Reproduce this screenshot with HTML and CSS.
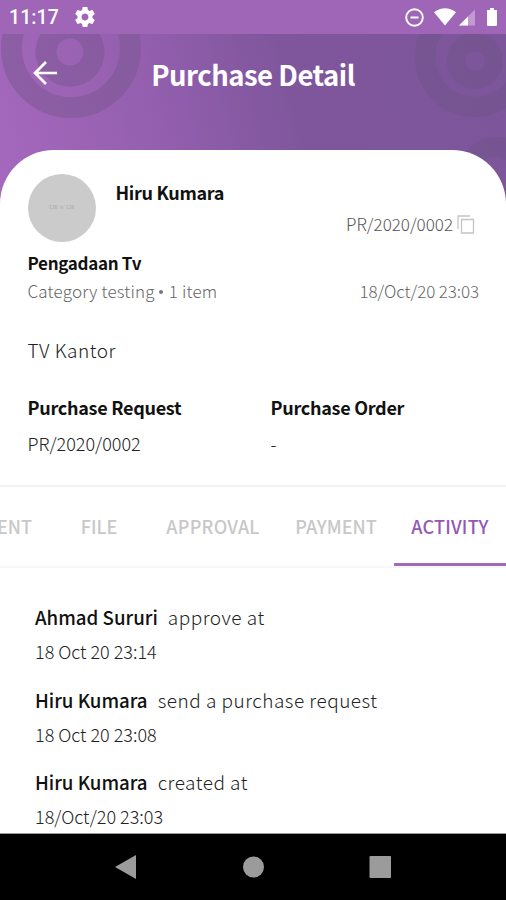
FILE: index.html
```
<!DOCTYPE html>
<html lang="en">
<head>
    <meta charset="UTF-8">
    <meta name="viewport" content="width=device-width, initial-scale=1.0">
    <title>Purchase Detail</title>
    <link rel="stylesheet" href="styles.css">
</head>
<body>
    <div class="status-bar">
        <span class="clock">11:17</span>
        <svg class="gear" width="20" height="20" viewBox="2 2 20 20" fill="#fff"><path d="M19.43 12.98c.04-.32.07-.64.07-.98s-.03-.66-.07-.98l2.11-1.65c.19-.15.24-.42.12-.64l-2-3.46c-.12-.22-.39-.3-.61-.22l-2.49 1c-.52-.4-1.08-.73-1.69-.98l-.38-2.65C14.46 2.18 14.25 2 14 2h-4c-.25 0-.46.18-.49.42l-.38 2.65c-.61.25-1.17.59-1.69.98l-2.49-1c-.23-.09-.49 0-.61.22l-2 3.46c-.13.22-.07.49.12.64l2.11 1.65c-.04.32-.07.65-.07.98s.03.66.07.98l-2.11 1.65c-.19.15-.24.42-.12.64l2 3.46c.12.22.39.3.61.22l2.49-1c.52.4 1.08.73 1.69.98l.38 2.65c.03.24.24.42.49.42h4c.25 0 .46-.18.49-.42l.38-2.65c.61-.25 1.17-.59 1.69-.98l2.49 1c.23.09.49 0 .61-.22l2-3.46c.12-.22.07-.49-.12-.64l-2.11-1.65zM12 15.5c-1.93 0-3.5-1.57-3.5-3.5s1.57-3.5 3.5-3.5 3.500 1.57 3.500 3.500-1.57 3.500-3.500 3.500z"/></svg>
        <svg class="status-icons" width="96" height="24" viewBox="0 0 96 24">
            <circle cx="9.500" cy="12.500" r="8.300" fill="none" stroke="#fff" stroke-width="1.900"/>
            <path d="M5.500 12.500h8" stroke="#fff" stroke-width="2"/>
            <path d="M29 7.200Q40 -.5 51 7.200L40 20.500z" fill="#fff"/>
            <path d="M54 20.500L70 4.500V20.500z" fill="#fff" opacity=".35"/>
            <path d="M54 20.500L63 11.500V20.500z" fill="#fff"/>
            <path d="M85 3h4v2h2.500q.5 0 .5.500V20q0 1-1 1h-8q-1 0-1-1V5.500q0-.5.500-.5H85z" fill="#fff"/>
        </svg>
    </div>

    <div class="header">
        <svg class="rings" width="506" height="170" viewBox="0 34 506 170" fill="none">
            <g stroke="#7b5794" stroke-opacity=".55">
                <circle cx="71" cy="48" r="59.500" stroke-width="21"/>
                <circle cx="70" cy="52" r="24" stroke-width="21"/>
            </g>
            <g stroke="#70548a" stroke-opacity=".5">
                <circle cx="475" cy="57" r="50" stroke-width="20"/>
                <circle cx="475" cy="61" r="19" stroke-width="18"/>
                <circle cx="496" cy="174" r="27" stroke-width="20"/>
            </g>
        </svg>
        <svg class="back" width="24" height="24" viewBox="0 0 24 24" fill="none" stroke="#fff" stroke-width="2.700"><path d="M24 12H2M13 1L2 12l11 11"/></svg>
        <h1>Purchase Detail</h1>
    </div>

    <div class="card">
        <div class="summary">
            <div class="top">
                <div class="avatar">128 × 128</div>
                <div class="who">
                    <div class="name">Hiru Kumara</div>
                    <div class="number">
                        <span>PR/2020/0002</span>
                        <svg width="18" height="19" viewBox="0 0 18 19" fill="none" stroke="#c4c4c4" stroke-width="1.300"><path d="M1 14V1h12M4.500 4.500h12v13.500h-12z"/></svg>
                    </div>
                </div>
            </div>
            <div class="title">Pengadaan Tv</div>
            <div class="meta">
                <span class="category">Category testing<i class="dot"></i>1 item</span>
                <span class="date">18/Oct/20 23:03</span>
            </div>
            <div class="description">TV Kantor</div>
            <div class="refs">
                <div>
                    <div class="label">Purchase Request</div>
                    <div class="value">PR/2020/0002</div>
                </div>
                <div>
                    <div class="label">Purchase Order</div>
                    <div class="value">-</div>
                </div>
            </div>
        </div>

        <div class="tabs">
            <div class="tab tab-cut">COMMENT</div>
            <div class="tab tab-file">FILE</div>
            <div class="tab tab-approval">APPROVAL</div>
            <div class="tab tab-payment">PAYMENT</div>
            <div class="tab active">ACTIVITY</div>
        </div>

        <div class="activity">
            <div class="entry">
                <div class="what"><b>Ahmad Sururi</b><span>approve at</span></div>
                <div class="when">18 Oct 20 23:14</div>
            </div>
            <div class="entry">
                <div class="what"><b>Hiru Kumara</b><span>send a purchase request</span></div>
                <div class="when">18 Oct 20 23:08</div>
            </div>
            <div class="entry">
                <div class="what"><b>Hiru Kumara</b><span>created at</span></div>
                <div class="when">18/Oct/20 23:03</div>
            </div>
        </div>
    </div>

    <div class="nav-bar">
        <svg width="506" height="66" viewBox="0 834 506 66" fill="#9b9b9b">
            <path d="M115 867L136 855V879z"/>
            <circle cx="253.500" cy="867" r="10.500"/>
            <rect x="369.500" y="856" width="21.500" height="22" rx="1"/>
        </svg>
    </div>
</body>
</html>
```
FILE: styles.css
```
* {
    box-sizing: border-box;
}

body {
    margin: 0;
    width: 506px;
    height: 900px;
    overflow: hidden;
    display: flex;
    flex-direction: column;
    background: #fff;
    color: #222;
    font-family: "Noto Sans CJK SC", "Open Sans", sans-serif;
    font-size: 18px;
    font-weight: 300;
    white-space: nowrap;
}

.status-bar {
    height: 34px;
    flex: none;
    display: flex;
    align-items: center;
    background: #9f65b7;
    color: #fff;
    padding: 0 8px 0 9px;
}

.clock {
    font-family: Roboto, sans-serif;
    font-size: 19.5px;
    font-weight: 500;
    line-height: 34px;
    width: 66px;
    padding-top: 2px;
    letter-spacing: 0.1px;
}

.status-icons {
    margin-left: auto;
    margin-right: -3px;
}

.header {
    position: relative;
    height: 170px;
    flex: none;
    background: linear-gradient(76deg, #a568bd 0%, #9a62b3 22%, #8f5dab 38%, #7f569c 58%, #7d559a 100%);
}

.rings {
    position: absolute;
    top: 0;
    left: 0;
}

.back {
    position: absolute;
    left: 33px;
    top: 27px;
}

.header h1 {
    position: relative;
    margin: 0;
    padding-top: 20px;
    color: #fff;
    font-size: 27.5px;
    font-weight: 700;
    letter-spacing: -0.5px;
    line-height: 40px;
    text-align: center;
}

.card {
    position: relative;
    height: 683px;
    margin-top: -54px;
    flex: none;
    background: #fff;
    border-radius: 54px 54px 0 0;
    overflow: hidden;
}

.summary {
    height: 337px;
    padding: 24px 27px 0 27.5px;
    border-bottom: 2px solid #f3f3f3;
}

.top {
    display: flex;
}

.avatar {
    width: 68px;
    height: 68px;
    border-radius: 50%;
    background: #cbcbcb;
    color: #999;
    font-size: 5.5px;
    line-height: 67px;
    text-align: center;
}

.who {
    flex: 1;
    padding: 4px 5px 0 20px;
}

.name,
.title,
.label {
    color: #111;
    font-weight: 700;
    line-height: 28px;
}

.name {
    letter-spacing: -0.3px;
}

.number {
    display: flex;
    justify-content: flex-end;
    align-items: center;
    gap: 4px;
    margin-top: 4px;
    margin-right: -1px;
    font-size: 17px;
    line-height: 28px;
    color: #555;
}

.title {
    margin-top: 7px;
    font-size: 17px;
    letter-spacing: -0.3px;
}

.meta {
    display: flex;
    justify-content: space-between;
    font-size: 17px;
    line-height: 27px;
    color: #666;
}

.category {
    letter-spacing: 0.18px;
}

.date {
    letter-spacing: -0.1px;
}

.dot {
    display: inline-block;
    width: 4px;
    height: 4px;
    margin: 0 6px 4px 4px;
    border-radius: 50%;
    background: #777;
}

.description {
    margin-top: 32px;
    font-size: 19px;
    letter-spacing: 0.5px;
    line-height: 28px;
}

.refs {
    display: grid;
    grid-template-columns: 243px 1fr;
    margin-top: 29px;
}

.label {
    letter-spacing: -0.28px;
}

.value {
    margin-top: 8px;
    line-height: 28px;
}

.tabs {
    display: flex;
    height: 81px;
    border-bottom: 2px solid #f7f7f7;
    color: #c8c8c8;
    font-weight: 500;
    line-height: 79px;
}

.tab {
    flex: none;
    text-align: center;
}

.tab-cut {
    width: 50px;
    display: flex;
    justify-content: flex-end;
    padding-right: 18px;
}

.tab-file {
    width: 98px;
}

.tab-approval {
    width: 130px;
    letter-spacing: 0.25px;
}

.tab-payment {
    width: 116px;
}

.active {
    width: 112px;
    height: 79px;
    border-bottom: 3px solid #a06cb8;
    color: #9557b3;
    letter-spacing: 0.2px;
}

.activity {
    padding: 35px 35px 0;
}

.entry {
    height: 82.5px;
}

.what {
    display: flex;
    gap: 10px;
    line-height: 28px;
}

.what b {
    color: #111;
    font-size: 18.7px;
    font-weight: 500;
}

.what span {
    font-size: 19px;
    letter-spacing: 0.5px;
}

.when {
    margin-top: 6px;
    line-height: 28px;
}

.nav-bar {
    height: 67px;
    flex: none;
    background: #000;
    border-top: 1px solid #999;
}

.nav-bar svg {
    display: block;
}
```
